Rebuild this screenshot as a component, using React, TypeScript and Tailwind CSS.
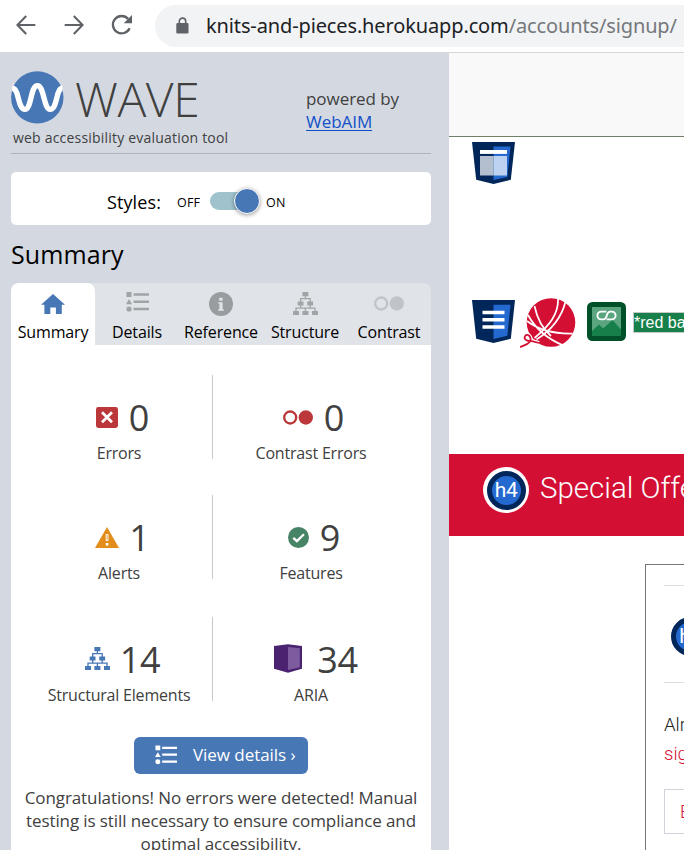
import type { ReactNode } from 'react';

type IconProps = { className?: string };

function BackArrow({ className }: IconProps) {
  return (
    <svg viewBox="0 0 20 20" className={className} fill="none" stroke="currentColor" strokeWidth="2.1">
      <path d="M19.3 10H1.8M10.2 1L1.4 10l8.8 9" />
    </svg>
  );
}

function Reload({ className }: IconProps) {
  return (
    <svg viewBox="0 0 22 22" className={className}>
      <path d="M18.6 14.2A8.7 8.7 0 1 1 17.2 5" fill="none" stroke="currentColor" strokeWidth="2.3" />
      <path d="M21 1v8.3h-8.3z" fill="currentColor" />
    </svg>
  );
}

function Lock({ className }: IconProps) {
  return (
    <svg viewBox="0 0 13 17" className={className}>
      <path d="M3.3 7V4.3a3.2 3.2 0 0 1 6.4 0V7" fill="none" stroke="currentColor" strokeWidth="1.6" />
      <rect x="0.3" y="6" width="12.2" height="10.6" rx="1.3" fill="currentColor" />
    </svg>
  );
}

function WaveLogo({ className }: IconProps) {
  return (
    <svg viewBox="0 0 53 53" className={className}>
      <circle cx="26.3" cy="26.4" r="26.2" fill="#4877b6" />
      <path
        d="M1.2 17.2C3.2 17.3 4.6 18.4 5.9 22.2C8 28.5 9 38.4 14 38.4C20.4 38.4 19.6 14.6 26.4 14.6C33.2 14.6 32.6 38.4 39.2 38.4C44.2 38.4 45 28.5 47.1 22.2C48.2 18.6 49.6 17.3 51.4 17.2"
        fill="none"
        stroke="#fff"
        strokeWidth="5.4"
      />
    </svg>
  );
}

function Home({ className }: IconProps) {
  return (
    <svg viewBox="0 0 24 20" className={className} fill="currentColor">
      <path d="M12 0L24 10.7h-3.2V20h-5.9v-6.5H9.3V20H3.4v-9.3H0z" />
    </svg>
  );
}

function ListIcon({ className }: IconProps) {
  return (
    <svg viewBox="0 0 23 20" className={className} fill="currentColor">
      <path d="M.5 0h5v5h-5zM3 7l3 5.2H0zM7.5 1.3H23v2.4H7.5zM7.5 8.5H23v2.4H7.5zM7.5 15.8H23v2.4H7.5z" />
      <circle cx="3" cy="17" r="2.6" />
    </svg>
  );
}

function InfoIcon({ className }: IconProps) {
  return (
    <svg viewBox="0 0 24 24" className={className}>
      <circle cx="12" cy="12" r="12" fill="currentColor" />
      <path d="M10.2 5.7h3.4v3h-3.4zM9.2 10.2h4.4v7h1.2v1.6H9.2v-1.6h1.2v-5.4H9.2z" fill="#e0e3e8" />
    </svg>
  );
}

function TreeIcon({ className }: IconProps) {
  return (
    <svg viewBox="0 0 25 23" className={className}>
      <path
        d="M9.4 0h6v4.2h-6zM4.7 9.6h5.8v4H4.7zM14.3 9.6h5.8v4h-5.8zM0 19h6v4H0zM9.4 19h6v4h-6zM19 19h6v4h-6z"
        fill="currentColor"
      />
      <path
        d="M12.4 4v3M7.7 10V6.7h9.5V10M7.7 13v3.3M17.2 13v3.3M3 19v-2.8h19V19M12.4 19v-2.8"
        fill="none"
        stroke="currentColor"
        strokeWidth="1.3"
      />
    </svg>
  );
}

function ContrastIcon({ className }: IconProps) {
  return (
    <svg viewBox="0 0 30 15" className={className}>
      <circle cx="7.2" cy="7.5" r="6" fill="none" stroke="currentColor" strokeWidth="2.3" />
      <circle cx="22.8" cy="7.5" r="7.2" fill="currentColor" />
    </svg>
  );
}

function ErrorIcon({ className }: IconProps) {
  return (
    <svg viewBox="0 0 22 21" className={className}>
      <rect width="22" height="21" rx="2.4" fill="#bb3739" />
      <path d="M6 5.3l10 10M16 5.3l-10 10" stroke="#fff" strokeWidth="2.7" />
    </svg>
  );
}

function AlertIcon({ className }: IconProps) {
  return (
    <svg viewBox="0 0 24 21" className={className}>
      <path d="M12 0l12 21H0z" fill="#e38e1b" />
      <path d="M11.2 7.5h1.8v6h-1.8z" fill="#e38e1b" stroke="#fff" strokeWidth="1" />
      <rect x="10.8" y="16" width="2.6" height="2.6" fill="#fff" />
    </svg>
  );
}

function FeatureIcon({ className }: IconProps) {
  return (
    <svg viewBox="0 0 21 21" className={className}>
      <circle cx="10.5" cy="10.5" r="10.5" fill="#478466" />
      <path d="M5.3 10.8l3.6 3.3 7-6.8" fill="none" stroke="#fff" strokeWidth="2.3" />
    </svg>
  );
}

function AriaIcon({ className }: IconProps) {
  return (
    <svg viewBox="0 0 28 29" className={className}>
      <path d="M0 2L14 .3 28 2v22.7L14 28.7 0 24.7z" fill="#4a2270" />
      <path d="M14 3l11.8 1.2v19L14 26z" fill="#7e5b9f" />
    </svg>
  );
}

function Shield({ children, className }: { children: ReactNode; className?: string }) {
  return (
    <svg viewBox="0 0 43 43" preserveAspectRatio="none" className={className}>
      <path d="M0 0h43l-4.2 38.7L21.5 43 4.2 38.7z" fill="#00265a" />
      <path d="M21.5 4.7h17L35.3 35.8 21.5 39z" fill="#2469cf" />
      {children}
    </svg>
  );
}

function YarnBall({ className }: IconProps) {
  return (
    <svg viewBox="0 0 56 50" className={className} fill="none">
      <circle cx="31" cy="24.5" r="24.3" fill="#d31034" />
      <g stroke="#fff" strokeWidth="1.7">
        <path d="M38 0C39 16 29 28 14.5 40M45.5 3.5C41 22 30 33 16.5 41.5" />
        <path d="M8 17C14 28 25 40 43.5 47.5M14.5 8C17 20 23 31 31 38M7 23C16 30 30 36 52.5 35.5" />
      </g>
      <path
        d="M0 49C4 47.5 8 46.5 10 43.5C12 39.5 8 35 5.5 37.5C3 40.5 6 43.5 12 43L19 45"
        stroke="#fff"
        strokeWidth="4"
      />
      <path
        d="M0 49C4 47.5 8 46.5 10 43.5C12 39.5 8 35 5.5 37.5C3 40.5 6 43.5 12 43.2L19 45"
        stroke="#d31034"
        strokeWidth="1.8"
      />
    </svg>
  );
}

function LinkedImageIcon({ className }: IconProps) {
  return (
    <svg viewBox="0 0 39 39" className={className}>
      <rect width="39" height="39" rx="5.5" fill="#00502a" />
      <rect x="5" y="5" width="29" height="29" fill="#5aa480" />
      <path d="M5 29l7-6.5 4 4L25.5 18l8.5 9.5V34H5z" fill="#17804a" />
      <path
        d="M19.4 9.6H14.3a3.9 3.9 0 0 0 0 7.8H16.4c4.6 0 2.2-7.8 6.8-7.8h1.5a3.9 3.9 0 0 1 0 7.8h-5"
        fill="none"
        stroke="#fff"
        strokeWidth="1.9"
      />
    </svg>
  );
}

function HeadingBadge({ label, ringed }: { label: string; ringed?: boolean }) {
  return (
    <div
      className={
        ringed
          ? 'flex size-[46px] shrink-0 items-center justify-center rounded-full bg-white'
          : 'flex size-[39px] shrink-0 items-center justify-center rounded-full bg-white'
      }
    >
      <div className="flex size-[39px] items-center justify-center rounded-full border-[5px] border-[#00265a] bg-[#2469cf] font-[Roboto,sans-serif] text-[21px] leading-none font-normal tracking-[-0.5px] text-white">
        {label}
      </div>
    </div>
  );
}

const tabs = [
  { label: 'Summary', icon: <Home className="h-5 w-6 text-[#4877b6]" /> },
  { label: 'Details', icon: <ListIcon className="mb-[3px] h-5 w-[23px] text-[#a0a4a7]" /> },
  { label: 'Reference', icon: <InfoIcon className="size-6 text-[#999da0]" /> },
  { label: 'Structure', icon: <TreeIcon className="mb-[1px] h-[23px] w-[25px] text-[#a0a4a7]" /> },
  { label: 'Contrast', icon: <ContrastIcon className="h-[15px] w-[30px] text-[#c0c3c7]" /> },
];

const stats = [
  [
    { label: 'Errors', value: '0', icon: <ErrorIcon className="h-[21px] w-[22px]" />, spacing: 'gap-[11px] pl-[7px]' },
    { label: 'Contrast Errors', value: '0', icon: <ContrastIcon className="h-[15px] w-[30px] text-[#bb3739]" />, spacing: 'gap-[11px] pl-[5px]' },
  ],
  [
    { label: 'Alerts', value: '1', icon: <AlertIcon className="h-[21px] w-6" />, spacing: 'gap-[10px] pl-[7px]' },
    { label: 'Features', value: '9', icon: <FeatureIcon className="size-[21px]" />, spacing: 'gap-[11px] pl-[6px]' },
  ],
  [
    { label: 'Structural Elements', value: '14', icon: <TreeIcon className="mb-[2px] h-[23px] w-[25px] text-[#4877b6]" />, spacing: 'gap-[10px] pl-[7px]' },
    { label: 'ARIA', value: '34', icon: <AriaIcon className="mb-[3px] h-[29px] w-7" />, spacing: 'gap-[15px] pl-[10px]' },
  ],
];

function BrowserBar() {
  return (
    <header className="flex h-[52px] shrink-0 items-center bg-white pl-4 text-[#5f6368]">
      <BackArrow className="mt-[-3px] size-5 shrink-0" />
      <BackArrow className="mt-[-3px] ml-7 size-5 shrink-0 rotate-180" />
      <Reload className="mt-[-3px] ml-[27px] size-[22px] shrink-0" />
      <div className="mt-[-1px] ml-[22px] flex h-[42px] flex-1 items-center rounded-l-full bg-[#f1f3f4] pl-[21px]">
        <Lock className="h-[17px] w-[13px] shrink-0" />
        <span className="ml-[17px] font-['Noto_Sans',sans-serif] text-[20px] tracking-[-0.13px] whitespace-nowrap text-[#202124]">
          knits-and-pieces.herokuapp.com<span className="text-[#75787b]">/accounts/signup/</span>
        </span>
      </div>
    </header>
  );
}

function Sidebar() {
  return (
    <aside className="flex w-[449px] shrink-0 flex-col bg-[#d4d9e1] pr-[18px] pl-[11px] font-['Open_Sans',sans-serif] text-[#404040]">
      <div className="flex h-[102px] shrink-0 border-b border-[#b0b4b6] pt-[19px]">
        <div className="w-[295px]">
          <div className="flex h-[53px] items-center">
            <WaveLogo className="size-[53px]" />
            <span className="mt-[2px] ml-[11px] text-[48px] leading-[56px] font-light tracking-[-0.4px]">WAVE</span>
          </div>
          <p className="mt-[4px] ml-[2px] text-[14px] leading-5 tracking-[0.2px] whitespace-nowrap">web accessibility evaluation tool</p>
        </div>
        <p className="mt-[16px] text-[17px] leading-[23px] tracking-[-0.05px] whitespace-nowrap">
          powered by
          <br />
          <a className="text-[#1250c8] underline underline-offset-2">WebAIM</a>
        </p>
      </div>

      <div className="mt-[18px] flex h-[53px] shrink-0 items-center rounded-[5px] bg-white pt-[7px] pl-[96px] text-black">
        <span className="w-[70px] text-[18px] tracking-[0.1px]">Styles:</span>
        <span className="mt-[2px] w-[33px] text-[12.5px] tracking-[0.2px]">OFF</span>
        <span className="mt-[-2px] flex h-[18px] w-12 items-center justify-end rounded-full bg-[#9fc2cc]">
          <span className="mr-[-2px] size-[26px] shrink-0 rounded-full border border-white bg-[#4877b6] shadow-[0_1px_4px_rgba(0,0,0,0.4)]" />
        </span>
        <span className="mt-[2px] ml-[8px] text-[12.5px] tracking-[0.3px]">ON</span>
      </div>

      <h2 className="mt-[12px] h-[46px] shrink-0 text-[25px] leading-[34px] tracking-[0.1px] text-black">Summary</h2>

      <nav className="grid h-[62px] shrink-0 grid-cols-5 rounded-t-lg bg-[#e0e3e8] text-black">
        {tabs.map((tab, i) => (
          <div
            key={tab.label}
            className={i === 0 ? 'flex flex-col items-center rounded-t-lg bg-white pt-[7px]' : 'flex flex-col items-center pt-[7px]'}
          >
            <span className="flex h-[27px] items-center">{tab.icon}</span>
            <span className="mt-[4px] text-[16px] leading-[22px] tracking-[-0.15px]">{tab.label}</span>
          </div>
        ))}
      </nav>

      <section className="flex flex-1 flex-col items-center bg-white pt-[30px]">
        {stats.map((row, i) => (
          <div key={row[0].label} className={i === 1 ? 'flex h-[122px] w-full' : 'flex h-[120px] w-full'}>
            {row.map((stat, j) => (
              <div
                key={stat.label}
                className={
                  j === 0
                    ? 'ml-[15px] flex h-[84px] w-[187px] flex-col items-center border-r border-[#c8c8c8]'
                    : 'flex h-[84px] w-[196px] flex-col items-center'
                }
              >
                <div className={`mt-[18px] flex h-[49px] items-center ${stat.spacing}`}>
                  {stat.icon}
                  <span className="text-[36px] leading-[49px] tracking-[-0.3px]">{stat.value}</span>
                </div>
                <span className="text-[16px] leading-[22px] tracking-[-0.2px] whitespace-nowrap">{stat.label}</span>
              </div>
            ))}
          </div>
        ))}
        <button className="flex h-[37px] w-[174px] shrink-0 items-center rounded-md bg-[#4877b6] pb-[2px] pl-[21px] text-white">
          <ListIcon className="h-5 w-[22px]" />
          <span className="ml-[16px] text-[17px] tracking-[-0.05px] whitespace-nowrap">View details ›</span>
        </button>
        <p className="mt-[12px] w-[410px] text-center text-[17px] leading-[23px] tracking-[-0.1px]">
          Congratulations! No errors were detected! Manual testing is still necessary to ensure compliance and optimal accessibility.
        </p>
      </section>
    </aside>
  );
}

function PageView() {
  return (
    <main className="flex min-w-0 flex-1 flex-col overflow-hidden bg-white font-[Roboto,sans-serif] font-light">
      <div className="h-[85px] shrink-0 border-t border-b border-t-[#d5d7da] border-b-[#6f7f68] bg-[#f9f9f9]" />
      <div className="h-[161px] shrink-0 pt-[5px] pl-[23px]">
        <Shield className="h-[42px] w-[43px]">
          <path d="M8 8.2h27v4H8z" fill="#fff" />
          <path d="M8 14.3h13.5v20H8z" fill="#b3bfce" />
          <path d="M21.5 14.3H35v20H21.5z" fill="#bcd2f0" />
        </Shield>
      </div>
      <div className="flex h-[156px] shrink-0 items-start pl-[23px]">
        <Shield className="mt-[2px] size-[43px] shrink-0">
          <path d="M10.5 10.7h22v3.6h-22zM10.5 18h22v3.6h-22zM10.5 25.2h22v3.6h-22z" fill="#fff" />
        </Shield>
        <YarnBall className="ml-[5px] h-[50px] w-[56px] shrink-0" />
        <LinkedImageIcon className="mt-[4px] ml-[11px] size-[39px] shrink-0" />
        <span className="mt-[14px] ml-[7px] flex h-[21px] shrink-0 items-center border border-[#c5c9c7] bg-[#17804a] font-['Liberation_Sans',sans-serif] text-[16px] font-normal whitespace-nowrap text-white">
          *red ball of yarn
        </span>
      </div>
      <div className="flex h-[82px] shrink-0 items-start bg-[#d31034] pt-[13px] pl-[34px]">
        <HeadingBadge label="h4" ringed />
        <span className="ml-[11px] text-[29.5px] leading-[42px] whitespace-nowrap text-white">Special Offer</span>
      </div>
      <div className="mt-[28px] ml-[196px] w-[240px] flex-1 shrink-0 border-t border-l border-[#777] pt-5 pl-[18px]">
        <div className="flex h-[98px] items-center border-y border-[#dedede] pt-1 pl-[7px]">
          <HeadingBadge label="h1" />
        </div>
        <p className="mt-[28px] text-[18.5px] leading-[29px] whitespace-nowrap text-[#222]">
          Already have an
          <br />
          <span className="text-[#d31034]">sign in</span>
        </p>
        <div className="mt-[20px] flex h-[45px] w-[200px] items-center border border-[#ced4da] pl-[15px] text-[18px] text-[#d31034]">
          E-mail
        </div>
      </div>
    </main>
  );
}

export default function App() {
  return (
    <div className="flex h-[850px] w-[684px] flex-col overflow-hidden bg-white">
      <BrowserBar />
      <div className="flex min-h-0 flex-1 overflow-hidden">
        <Sidebar />
        <PageView />
      </div>
    </div>
  );
}
